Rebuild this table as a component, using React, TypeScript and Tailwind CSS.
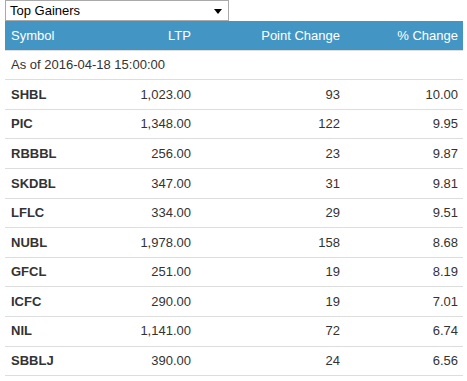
const rows = [
  { symbol: "SHBL", ltp: "1,023.00", point: "93", pct: "10.00" },
  { symbol: "PIC", ltp: "1,348.00", point: "122", pct: "9.95" },
  { symbol: "RBBBL", ltp: "256.00", point: "23", pct: "9.87" },
  { symbol: "SKDBL", ltp: "347.00", point: "31", pct: "9.81" },
  { symbol: "LFLC", ltp: "334.00", point: "29", pct: "9.51" },
  { symbol: "NUBL", ltp: "1,978.00", point: "158", pct: "8.68" },
  { symbol: "GFCL", ltp: "251.00", point: "19", pct: "8.19" },
  { symbol: "ICFC", ltp: "290.00", point: "19", pct: "7.01" },
  { symbol: "NIL", ltp: "1,141.00", point: "72", pct: "6.74" },
  { symbol: "SBBLJ", ltp: "390.00", point: "24", pct: "6.56" },
];

const grid = "grid grid-cols-[80px_111px_149px_118px] items-center";

export default function App() {
  return (
    <div className="min-h-screen bg-white font-['Liberation_Sans',Arial,sans-serif] text-[13px] text-[#333]">
      <div className="ml-[5px] flex h-[21px] w-[224px] items-center justify-between border border-[#a9a9a9] bg-white pl-[4px] pr-[6px] text-black">
        <span>Top Gainers</span>
        <svg width="8" height="5" viewBox="0 0 8 5" className="mt-[1px]">
          <path d="M0 0h8L4 5z" fill="#000" />
        </svg>
      </div>
      <div className="ml-[5px] w-[458px]">
        <div className={`${grid} h-[28.6px] bg-[#4396c4] text-white`}>
          <div className="pl-[6px]">Symbol</div>
          <div className="pr-[5px] text-right">LTP</div>
          <div className="pr-[5px] text-right">Point Change</div>
          <div className="pr-[5px] text-right">% Change</div>
        </div>
        <div className="flex h-[29.6px] items-center border-t border-[#dddddd] pl-[6px]">
          As of 2016-04-18 15:00:00
        </div>
        {rows.map((row) => (
          <div key={row.symbol} className={`${grid} h-[29.6px] border-t border-[#dddddd]`}>
            <div className="pl-[6px] font-bold">{row.symbol}</div>
            <div className="pr-[5px] text-right">{row.ltp}</div>
            <div className="pr-[5px] text-right">{row.point}</div>
            <div className="pr-[5px] text-right">{row.pct}</div>
          </div>
        ))}
        <div className="border-t border-[#dddddd]" />
      </div>
    </div>
  );
}
